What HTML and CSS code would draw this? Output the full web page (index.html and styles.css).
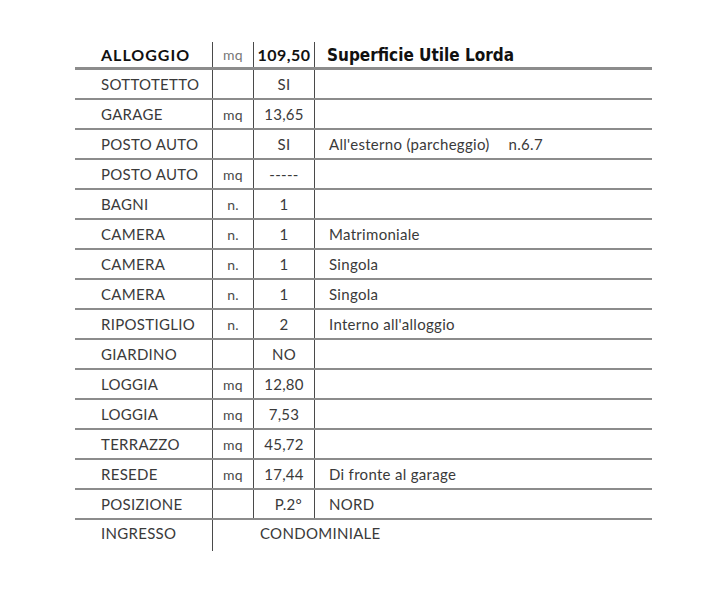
FILE: index.html
```html
<!DOCTYPE html>
<html lang="it">
<head>
<meta charset="utf-8">
<title>Alloggio</title>
<link rel="stylesheet" href="styles.css">
</head>
<body>
<div class="sheet">
  <div class="row head">
    <div class="cell c1 bold">ALLOGGIO</div>
    <div class="cell c2 unit light">mq</div>
    <div class="cell c3 bold num">109,50</div>
    <div class="cell c4 title">Superficie Utile Lorda</div>
  </div>
  <div class="row"><div class="cell c1">SOTTOTETTO</div><div class="cell c2"></div><div class="cell c3">SI</div><div class="cell c4"></div></div>
  <div class="row"><div class="cell c1">GARAGE</div><div class="cell c2 unit">mq</div><div class="cell c3">13,65</div><div class="cell c4"></div></div>
  <div class="row"><div class="cell c1">POSTO AUTO</div><div class="cell c2"></div><div class="cell c3">SI</div><div class="cell c4"><span>All'esterno (parcheggio)</span><span class="gap">n.6.7</span></div></div>
  <div class="row"><div class="cell c1">POSTO AUTO</div><div class="cell c2 unit">mq</div><div class="cell c3">-----</div><div class="cell c4"></div></div>
  <div class="row"><div class="cell c1">BAGNI</div><div class="cell c2 unit">n.</div><div class="cell c3">1</div><div class="cell c4"></div></div>
  <div class="row"><div class="cell c1">CAMERA</div><div class="cell c2 unit">n.</div><div class="cell c3">1</div><div class="cell c4">Matrimoniale</div></div>
  <div class="row"><div class="cell c1">CAMERA</div><div class="cell c2 unit">n.</div><div class="cell c3">1</div><div class="cell c4">Singola</div></div>
  <div class="row"><div class="cell c1">CAMERA</div><div class="cell c2 unit">n.</div><div class="cell c3">1</div><div class="cell c4">Singola</div></div>
  <div class="row"><div class="cell c1">RIPOSTIGLIO</div><div class="cell c2 unit">n.</div><div class="cell c3">2</div><div class="cell c4">Interno all'alloggio</div></div>
  <div class="row"><div class="cell c1">GIARDINO</div><div class="cell c2"></div><div class="cell c3">NO</div><div class="cell c4"></div></div>
  <div class="row"><div class="cell c1">LOGGIA</div><div class="cell c2 unit">mq</div><div class="cell c3">12,80</div><div class="cell c4"></div></div>
  <div class="row"><div class="cell c1">LOGGIA</div><div class="cell c2 unit">mq</div><div class="cell c3">7,53</div><div class="cell c4"></div></div>
  <div class="row"><div class="cell c1">TERRAZZO</div><div class="cell c2 unit">mq</div><div class="cell c3">45,72</div><div class="cell c4"></div></div>
  <div class="row"><div class="cell c1">RESEDE</div><div class="cell c2 unit">mq</div><div class="cell c3">17,44</div><div class="cell c4">Di fronte al garage</div></div>
  <div class="row"><div class="cell c1">POSIZIONE</div><div class="cell c2"></div><div class="cell c3 right">P.2°</div><div class="cell c4">NORD</div></div>
  <div class="row last"><div class="cell c1">INGRESSO</div><div class="cell span">CONDOMINIALE</div></div>
</div>
</body>
</html>
```

FILE: styles.css
```css
html, body {
  margin: 0;
  background: #ffffff;
}
.sheet {
  padding: 42px 0 0 75px;
  font-family: "Lato", "DejaVu Sans", sans-serif;
  font-size: 15px;
  letter-spacing: 0.3px;
  color: #3a3a3a;
}
.row {
  display: grid;
  grid-template-columns: 138px 41px 61px 337px;
  width: 577px;
  height: 30px;
  box-sizing: border-box;
  border-bottom: 2px solid #8c8c8c;
}
.row.head {
  height: 28px;
  border-bottom: 3px solid #8c8c8c;
}
.row.last {
  grid-template-columns: 138px 439px;
  height: 31px;
  border-bottom: none;
}
.row.last .cell {
  align-items: flex-start;
  padding-top: 4px;
}
.cell {
  display: flex;
  align-items: center;
  white-space: nowrap;
}
.c1 {
  padding-left: 26px;
  border-right: 1px solid #4a4a4a;
}
.row.last .c1 {
  padding-left: 26px;
}
.c2 {
  justify-content: center;
  border-right: 1px solid #4a4a4a;
}
.c3 {
  justify-content: center;
  border-right: 1px solid #4a4a4a;
}
.c3.right {
  justify-content: flex-end;
  padding-right: 12px;
}
.c4 {
  padding-left: 14px;
}
.span {
  padding-left: 47px;
}
.unit {
  font-size: 14px;
  color: #4a4a4a;
}
.unit.light {
  color: #777777;
}
.bold {
  font-weight: 700;
  font-size: 16px;
  letter-spacing: 1px;
  color: #111111;
}
.num {
  letter-spacing: 0.5px;
}
.title {
  font-family: "DejaVu Sans", sans-serif;
  font-stretch: condensed;
  font-weight: 700;
  font-size: 17px;
  letter-spacing: 0;
  color: #111111;
  padding-left: 12px;
}
.gap {
  margin-left: 19px;
}
```
